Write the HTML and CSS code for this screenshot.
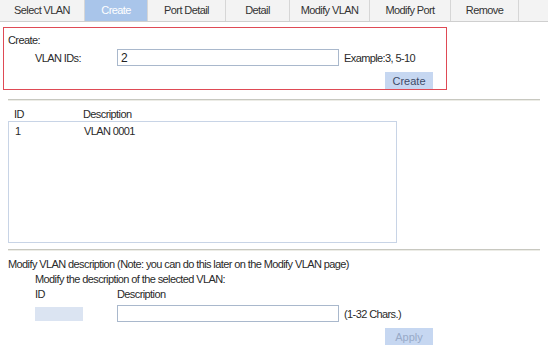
FILE: index.html
```html
<!DOCTYPE html>
<html lang="en">
<head>
    <meta charset="UTF-8">
    <title>VLAN</title>
    <link rel="stylesheet" href="styles.css">
</head>
<body>
    <div class="tabs">
        <div class="tab t1">Select VLAN</div>
        <div class="tab t2 active">Create</div>
        <div class="tab t3">Port Detail</div>
        <div class="tab t4">Detail</div>
        <div class="tab t5">Modify VLAN</div>
        <div class="tab t6">Modify Port</div>
        <div class="tab t7">Remove</div>
        <div class="tab t8"></div>
    </div>

    <div class="create-box">
        <div class="title">Create:</div>
        <div class="row">
            <span class="label">VLAN IDs:</span>
            <input class="field" type="text" value="2">
            <span class="hint">Example:3, 5-10</span>
        </div>
        <div class="btn-row">
            <button class="btn">Create</button>
        </div>
    </div>

    <div class="sep"></div>

    <div class="list-head">
        <span class="col-id">ID</span>
        <span>Description</span>
    </div>
    <div class="list">
        <div class="list-row">
            <span class="col-id">1</span>
            <span>VLAN 0001</span>
        </div>
    </div>

    <div class="sep sep2"></div>

    <div class="modify">
        <div class="note">Modify VLAN description (Note: you can do this later on the Modify VLAN page)</div>
        <div class="sub">Modify the description of the selected VLAN:</div>
        <div class="row head">
            <span class="label">ID</span>
            <span>Description</span>
        </div>
        <div class="row">
            <span class="label"><span class="id-box"></span></span>
            <input class="field" type="text">
            <span class="hint">(1-32 Chars.)</span>
        </div>
        <div class="btn-row">
            <button class="btn disabled">Apply</button>
        </div>
    </div>
</body>
</html>
```

FILE: styles.css
```css
body {
    margin: 0;
    font-family: "Liberation Sans", Arial, sans-serif;
    font-size: 11px;
    letter-spacing: -0.6px;
    color: #2a2a2a;
    background: #fff;
    width: 548px;
    height: 346px;
    overflow: hidden;
}
.tabs {
    display: flex;
    height: 21px;
    border-bottom: 1px solid #cfcfcf;
    background: #f3f3f3;
}
.tab {
    line-height: 21px;
    text-align: center;
    color: #333;
    border-right: 1px solid #d6d6d6;
    box-sizing: border-box;
}
.tab.active {
    background: #a9c5ea;
    color: #fff;
}
.t1 { width: 85px; }
.t2 { width: 63px; }
.t3 { width: 78px; }
.t4 { width: 64px; }
.t5 { width: 80px; }
.t6 { width: 81px; }
.t7 { width: 68px; }
.t8 { width: 29px; border-right: none; }

.create-box {
    margin: 5px 0 0 3px;
    width: 444px;
    height: 63px;
    border: 1px solid #df4a55;
    box-sizing: border-box;
    padding: 5px 0 0 4px;
}
.title {
    line-height: 14px;
}
.row {
    display: flex;
    align-items: center;
}
.create-box .row {
    margin-top: 2px;
}
.label {
    width: 82px;
    padding-left: 27px;
}
.field {
    width: 222px;
    height: 17px;
    box-sizing: border-box;
    margin: 0;
    padding: 0 3px;
    border: 1px solid #a9b8cc;
    font: inherit;
    font-size: 12px;
    letter-spacing: 0;
    color: #222;
}
.hint {
    margin-left: 5px;
}
.btn-row {
    display: flex;
    justify-content: flex-start;
    padding-left: 377px;
    margin-top: 6px;
}
.btn {
    width: 48px;
    height: 17px;
    border: none;
    background: #c6d7f1;
    color: #3d4a66;
    font: inherit;
    padding: 0;
}
.btn.disabled {
    color: #98aac8;
}

.sep {
    margin: 9px 8px 0 8px;
    height: 1px;
    background: #c8c8c0;
    border-bottom: 1px solid #ecece6;
}
.list-head {
    display: flex;
    margin: 7px 0 0 14px;
    height: 13px;
    line-height: 13px;
}
.col-id {
    width: 69px;
}
.list {
    margin: 0 0 0 8px;
    width: 389px;
    height: 122px;
    border: 1px solid #c8d4e6;
    box-sizing: border-box;
}
.list-row {
    display: flex;
    padding: 3px 0 0 6px;
}
.sep2 {
    margin-top: 6px;
}

.modify {
    padding: 5px 0 0 8px;
}
.note {
    line-height: 16px;
}
.sub {
    padding-left: 27px;
    line-height: 15px;
}
.modify .row.head {
    height: 18px;
    align-items: flex-start;
    line-height: 15px;
}
.id-box {
    display: inline-block;
    width: 48px;
    height: 14px;
    background: #dbe4f2;
    vertical-align: middle;
}
.modify .btn-row {
    margin-top: 6px;
}
```
